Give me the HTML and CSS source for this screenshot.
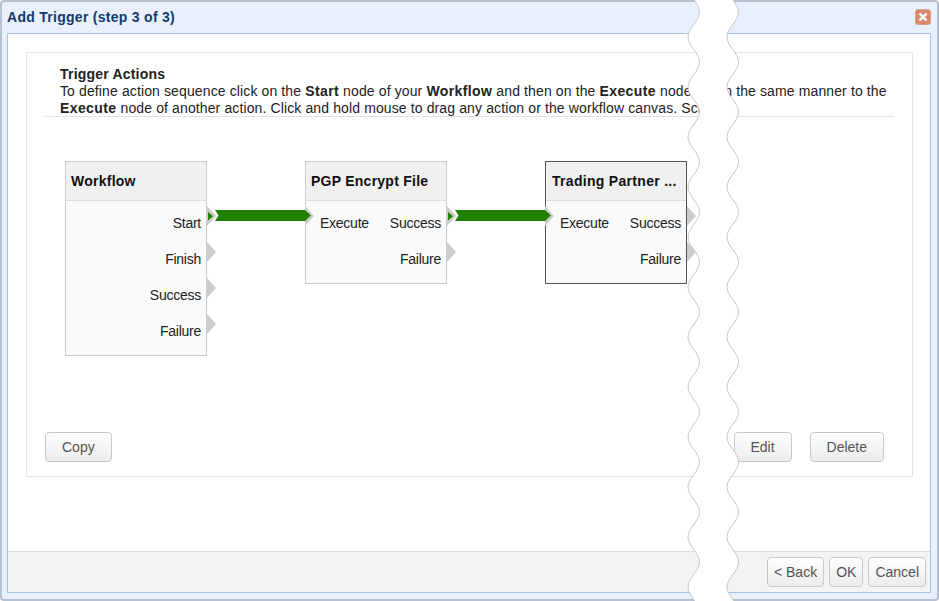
FILE: index.html
```html
<!DOCTYPE html>
<html lang="en">
<head>
<meta charset="utf-8">
<title>Add Trigger</title>
<link rel="stylesheet" href="styles.css">
</head>
<body>
<div class="dialog">
  <header class="dialog-head">
    <h1 class="dialog-title">Add Trigger (step 3 of 3)</h1>
    <button class="close" aria-label="Close">
      <svg width="10" height="10" viewBox="0 0 10 10"><path d="M1.5 1.5l7 7M8.5 1.5l-7 7" stroke="#fff" stroke-width="2.4" fill="none"/></svg>
    </button>
  </header>
  <div class="dialog-body">
    <section class="panel">
      <div class="intro">
        <strong class="intro-title">Trigger Actions</strong>
        <p class="intro-text">To define action sequence click on the <b>Start</b> node of your <b>Workflow</b> and then on the <b>Execute</b> node. So in the same manner to the<br><b>Execute</b> node of another action. Click and hold mouse to drag any action or the workflow canvas. Scroll</p>
      </div>
      <div class="canvas">
        <div class="node node-a">
          <div class="node-head">Workflow</div>
          <div class="node-body">
            <div class="row"><span></span><span class="out">Start</span></div>
            <div class="row"><span></span><span class="out">Finish</span></div>
            <div class="row"><span></span><span class="out">Success</span></div>
            <div class="row"><span></span><span class="out">Failure</span></div>
          </div>
        </div>
        <div class="node node-b">
          <div class="node-head">PGP Encrypt File</div>
          <div class="node-body">
            <div class="row"><span class="in">Execute</span><span class="out">Success</span></div>
            <div class="row"><span></span><span class="out">Failure</span></div>
          </div>
        </div>
        <div class="node node-c">
          <div class="node-head">Trading Partner ...</div>
          <div class="node-body">
            <div class="row"><span class="in">Execute</span><span class="out">Success</span></div>
            <div class="row"><span></span><span class="out">Failure</span></div>
          </div>
        </div>
        <svg class="links" viewBox="27 117 885 315" width="885" height="315">
          <g fill="#228000">
            <path d="M208 212l5 4.2-5 4.3z"/>
            <path d="M215 210h90l6 5.5-6 5.5h-90l3.500-5.500z"/>
            <path d="M448 212l5 4.200-5 4.300z"/>
            <path d="M455 210h90l6 5.500-6 5.500h-90l3.500-5.500z"/>
          </g>
        </svg>
      </div>
      <div class="actions">
        <button class="btn btn-wide">Copy</button>
        <div class="actions-right">
          <button class="btn btn-edit">Edit</button>
          <button class="btn btn-wide">Delete</button>
        </div>
      </div>
    </section>
    <footer class="dialog-foot">
      <button class="btn">&lt; Back</button>
      <button class="btn">OK</button>
      <button class="btn">Cancel</button>
    </footer>
  </div>
</div>
<svg class="tear" width="939" height="601" viewBox="0 0 939 601" aria-hidden="true">
  <path fill="#fff" stroke="#c6c6c6" stroke-width="1" d="M688 -13c0 9 11.500 16 11.500 25s-11.500 16-11.500 25s11.500 16 11.500 25s-11.500 16-11.500 25s11.500 16 11.500 25s-11.500 16-11.500 25s11.500 16 11.500 25s-11.500 16-11.500 25s11.500 16 11.500 25s-11.500 16-11.500 25s11.500 16 11.500 25s-11.500 16-11.500 25s11.500 16 11.500 25s-11.500 16-11.500 25s11.500 16 11.500 25s-11.500 16-11.500 25s11.500 16 11.500 25s-11.500 16-11.500 25s11.500 16 11.500 25s-11.500 16-11.500 25s11.500 16 11.500 25s-11.500 16-11.500 25s11.500 16 11.500 25s-11.500 16-11.500 25s11.500 16 11.500 25L738.500 612c0-9-11.500-16-11.500-25s11.500-16 11.500-25s-11.500-16-11.500-25s11.500-16 11.500-25s-11.500-16-11.500-25s11.500-16 11.500-25s-11.500-16-11.500-25s11.500-16 11.500-25s-11.500-16-11.500-25s11.500-16 11.500-25s-11.500-16-11.500-25s11.500-16 11.500-25s-11.500-16-11.500-25s11.500-16 11.500-25s-11.500-16-11.500-25s11.500-16 11.500-25s-11.500-16-11.500-25s11.500-16 11.500-25s-11.500-16-11.500-25s11.500-16 11.500-25s-11.500-16-11.500-25s11.500-16 11.500-25s-11.500-16-11.500-25s11.500-16 11.500-25s-11.500-16-11.500-25z"/>
</svg>
</body>
</html>
```

FILE: styles.css
```css
* { box-sizing: border-box; }
html, body { margin: 0; height: 100%; }
body {
  position: relative;
  width: 939px;
  height: 601px;
  overflow: hidden;
  background: #fff;
  font-family: "Liberation Sans", Arial, sans-serif;
  font-size: 14px;
  line-height: 17px;
  color: #222;
}
.dialog {
  display: flex;
  flex-direction: column;
  width: 100%;
  height: 100%;
  padding: 0 6px 6px 5px;
  background: #e8f0fd;
  border: 2px solid #b7c2d0;
  border-radius: 4px;
}
.dialog-head {
  display: flex;
  align-items: center;
  justify-content: space-between;
  height: 31px;
  flex: none;
  padding-bottom: 1px;
}
.dialog-title {
  margin: 0;
  font-size: 14px;
  font-weight: bold;
  letter-spacing: 0.28px;
  color: #15396b;
}
.close {
  display: flex;
  align-items: center;
  justify-content: center;
  width: 16px;
  height: 16px;
  margin: 0 0 1px;
  padding: 0;
  background: #d98a6c;
  border: 1px solid #d0a08c;
  border-radius: 3px;
}
.dialog-body {
  display: flex;
  flex-direction: column;
  flex: 1;
  min-height: 0;
  background: #fff;
  border: 1px solid #a6c4f1;
}
.panel {
  display: flex;
  flex-direction: column;
  height: 425px;
  margin: 18px 17px 0 18px;
  border: 1px solid #e4e4e4;
}
.intro {
  height: 64px;
  margin: 0 18px;
  padding: 13px 0 0 15px;
  overflow: hidden;
  border-bottom: 1px solid #e2e2e2;
  flex: none;
  white-space: nowrap;
}
.intro-title { display: block; font-weight: bold; letter-spacing: 0.2px; }
.intro-text { margin: 0; letter-spacing: 0.12px; }
.intro-text b { letter-spacing: 0.4px; }
.canvas {
  position: relative;
  flex: none;
  height: 315px;
}
.node {
  position: absolute;
  top: 44px;
  width: 142px;
  background: #fafafa;
  border: 1px solid #ccc;
}
.node-a { left: 38px; height: 195px; }
.node-b { left: 278px; height: 123px; }
.node-c { left: 518px; height: 123px; border-color: #555; }
.node-head {
  height: 39px;
  padding: 0 5px;
  font-weight: bold;
  letter-spacing: 0.25px;
  line-height: 38px;
  white-space: nowrap;
  color: #111;
  background: #f0f0f0;
  border-bottom: 1px solid #ddd;
}
.node-c .node-head { padding-left: 6px; letter-spacing: 0.3px; }
.node-body { padding-top: 4px; }
.row {
  position: relative;
  display: flex;
  align-items: center;
  justify-content: space-between;
  height: 36px;
  padding: 0 5px 0 14px;
  letter-spacing: -0.25px;
}
.out::after, .in::before {
  content: "";
  position: absolute;
  top: 1px;
  width: 0;
  height: 0;
  border-style: solid;
  border-width: 10px 0 10px 9px;
  border-color: transparent transparent transparent #ccc;
}
.out::after { right: -10px; }
.in::before { left: -1px; }
.links {
  position: absolute;
  top: 0;
  left: 0;
  pointer-events: none;
}
.actions {
  display: flex;
  justify-content: space-between;
  padding: 0 28px 0 18px;
}
.actions-right { display: flex; gap: 18px; }
.btn {
  height: 30px;
  padding: 0 6px;
  font: 14px "Liberation Sans", Arial, sans-serif;
  color: #555;
  background: linear-gradient(#fefefe, #ececec);
  border: 1px solid #c8c8c8;
  border-radius: 4px;
}
.btn-wide { padding: 0 16px; }
.btn-edit { width: 58px; padding: 0; }
.dialog-foot {
  display: flex;
  justify-content: flex-end;
  gap: 5px;
  flex: 1;
  margin-top: 74px;
  padding: 5px 4px 0 0;
  background: #f3f3f3;
  border-top: 1px solid #ddd;
}
.tear {
  position: absolute;
  top: 0;
  left: 0;
  z-index: 2;
}
```
